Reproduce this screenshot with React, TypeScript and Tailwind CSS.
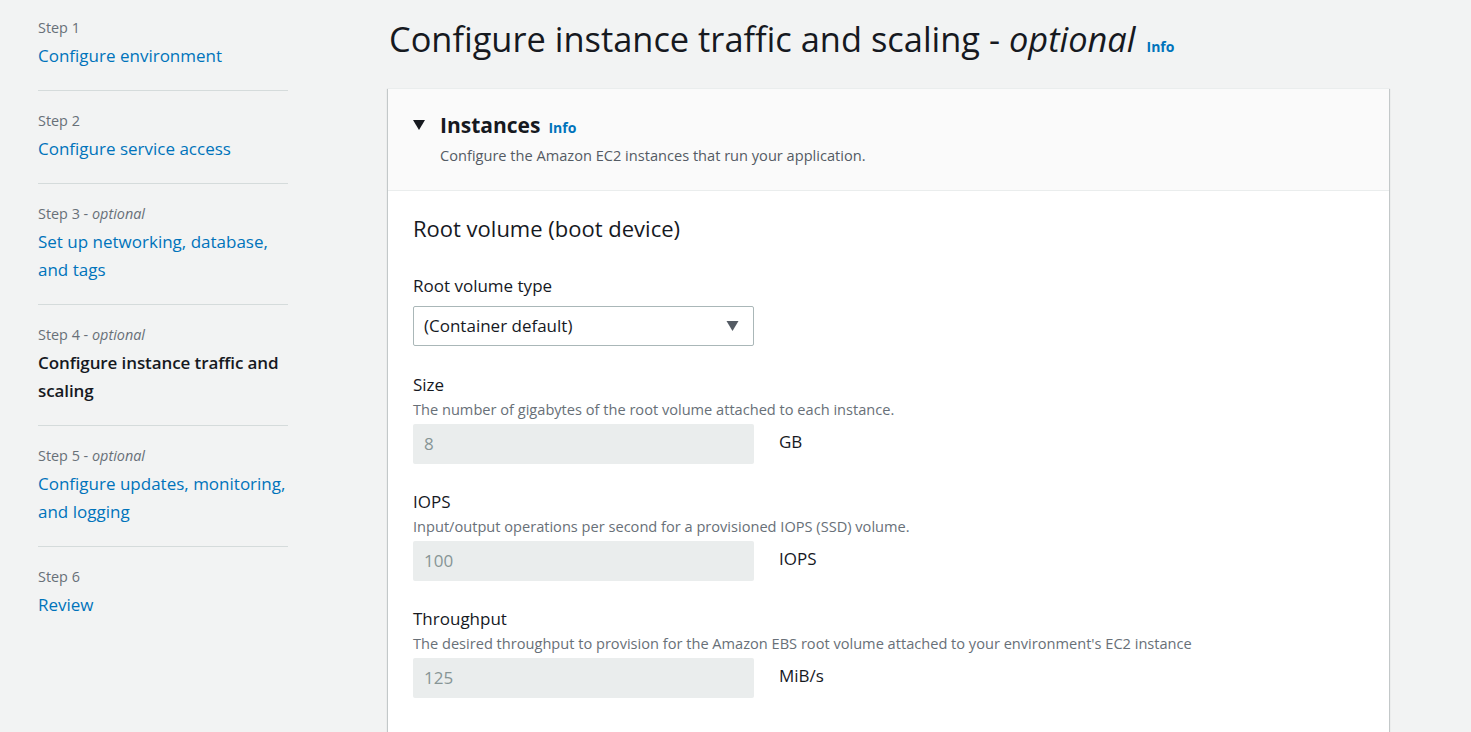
import React from 'react';

interface Step {
    label: string;
    optional?: boolean;
    title: string;
    current?: boolean;
}

const steps: Step[] = [
    { label: 'Step 1', title: 'Configure environment' },
    { label: 'Step 2', title: 'Configure service access' },
    { label: 'Step 3', optional: true, title: 'Set up networking, database, and tags' },
    { label: 'Step 4', optional: true, title: 'Configure instance traffic and scaling', current: true },
    { label: 'Step 5', optional: true, title: 'Configure updates, monitoring, and logging' },
    { label: 'Step 6', title: 'Review' },
];

function Caret({ className }: { className?: string }) {
    return (
        <svg viewBox="0 0 12 10" className={className} fill="currentColor">
            <path d="M0 0 H12 L6 10 Z" />
        </svg>
    );
}

function Field({ label, description, value, unit, first }: { label: string; description: string; value: string; unit: string; first?: boolean }) {
    return (
        <div className={first ? 'mt-[28px]' : 'mt-[27px]'}>
            <div className="text-[17px] leading-[22px] text-[#16191f]">{label}</div>
            <div className="mt-1 text-[14.6px] leading-[18px] text-[#687078]">{description}</div>
            <div className="mt-1.5 flex items-center">
                <div className="w-[341px] h-10 rounded-[2px] bg-[#eaeded] px-[11px] flex items-center text-[17px] text-[#879596]">{value}</div>
                <div className="ml-[25px] text-[17px] text-[#16191f] -mt-1">{unit}</div>
            </div>
        </div>
    );
}

export default function App() {
    return (
        <div className="min-h-screen bg-[#f2f3f3] font-['Open_Sans',sans-serif] text-[#16191f] flex overflow-hidden h-[732px]">
            <nav className="ml-[38px] w-[250px] shrink-0 pt-[18px]">
                {steps.map((s, i) => (
                    <div key={s.label} className={`${i === 0 ? '' : 'pt-5'} ${i === steps.length - 1 ? '' : 'pb-5 border-b border-[#d5dbdb]'}`}>
                        <div className="text-[14.4px] leading-5 text-[#687078]">
                            {s.label}
                            {s.optional && <> - <i>optional</i></>}
                        </div>
                        <div className={`mt-1 text-[17px] leading-[28px] ${s.current ? 'font-semibold tracking-[-0.1px] text-[#16191f]' : 'text-[#0073bb]'}`}>{s.title}</div>
                    </div>
                ))}
            </nav>

            <main className="ml-[100px] w-[1001px] shrink-0">
                <div className="pt-[17px] pl-px flex items-baseline">
                    <h1 className="text-[34.4px] leading-[44px] font-normal text-[#16191f]">
                        Configure instance traffic and scaling - <i>optional</i>
                    </h1>
                    <span className="ml-[11px] text-[14px] font-bold text-[#0073bb]">Info</span>
                </div>

                <section className="mt-[27px] bg-white border-t border-[#eaeded] shadow-[0_1px_1px_0_rgba(0,28,36,0.3),1px_1px_1px_0_rgba(0,28,36,0.15),-1px_1px_1px_0_rgba(0,28,36,0.15)] min-h-[700px]">
                    <div className="bg-[#fafafa] border-b border-[#eaeded] pl-[25px] pt-[22px] pb-[25px]">
                        <div className="flex items-center">
                            <Caret className="w-3 h-[10px] text-[#16191f]" />
                            <h2 className="ml-[15px] text-[21px] leading-[28px] font-bold">Instances</h2>
                            <span className="ml-[8px] mt-1 text-[14px] font-bold text-[#0073bb]">Info</span>
                        </div>
                        <p className="ml-[27px] mt-1.5 text-[14.6px] leading-5 text-[#545b64]">Configure the Amazon EC2 instances that run your application.</p>
                    </div>

                    <div className="px-[25px] pt-[23px]">
                        <h3 className="text-[22px] leading-[28px] font-normal">Root volume (boot device)</h3>

                        <div className="mt-[33px] text-[17px] leading-[22px]">Root volume type</div>
                        <div className="mt-[9px] w-[341px] h-10 border border-[#aab7b8] rounded-[2px] flex items-center justify-between pl-[10px] pr-[14px]">
                            <span className="text-[17px]">(Container default)</span>
                            <Caret className="w-[13px] h-[10px] text-[#545b64]" />
                        </div>

                        <Field first label="Size" description="The number of gigabytes of the root volume attached to each instance." value="8" unit="GB" />
                        <Field label="IOPS" description="Input/output operations per second for a provisioned IOPS (SSD) volume." value="100" unit="IOPS" />
                        <Field label="Throughput" description="The desired throughput to provision for the Amazon EBS root volume attached to your environment's EC2 instance" value="125" unit="MiB/s" />
                    </div>
                </section>
            </main>
        </div>
    );
}
